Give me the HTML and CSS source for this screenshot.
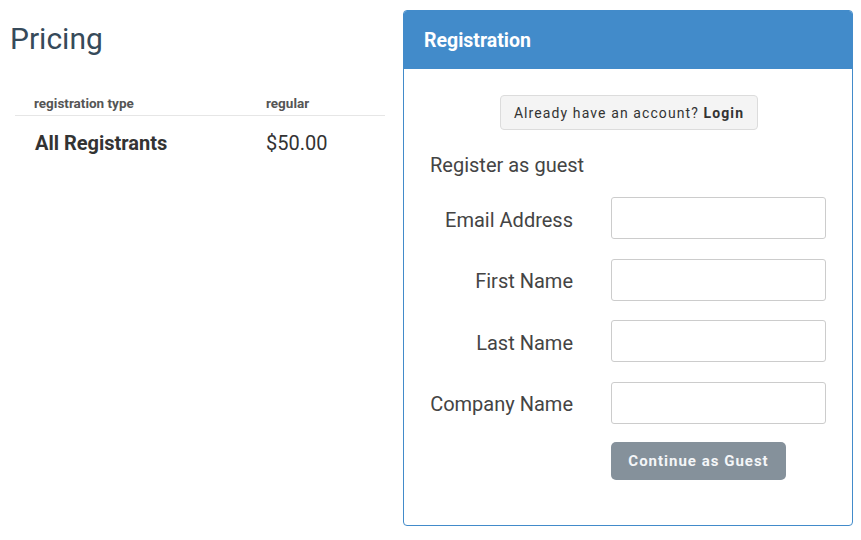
FILE: index.html
```html
<!DOCTYPE html>
<html>
<head>
<meta charset="utf-8">
<link rel="stylesheet" href="styles.css">
</head>
<body>
<div class="page">
  <section class="pricing">
    <h1 class="pricing-title">Pricing</h1>
    <table class="price-table">
      <thead>
        <tr><th class="col-type">registration type</th><th class="col-price">regular</th></tr>
      </thead>
      <tbody>
        <tr><td class="cell-type">All Registrants</td><td class="cell-price">$50.00</td></tr>
      </tbody>
    </table>
  </section>
  <section class="panel">
    <div class="panel-head">Registration</div>
    <div class="panel-body">
      <div class="login-wrap">
        <button class="login-btn">Already have an account? <b>Login</b></button>
      </div>
      <div class="guest-title">Register as guest</div>
      <form class="form">
        <label class="form-label">Email Address</label>
        <input class="form-input" type="text">
        <label class="form-label">First Name</label>
        <input class="form-input" type="text">
        <label class="form-label">Last Name</label>
        <input class="form-input" type="text">
        <label class="form-label">Company Name</label>
        <input class="form-input" type="text">
        <span></span>
        <div><button type="button" class="guest-btn">Continue as Guest</button></div>
      </form>
    </div>
  </section>
</div>
</body>
</html>
```
FILE: styles.css
```css
html, body {
  margin: 0;
  padding: 0;
  background: #fff;
  font-family: Roboto, "Liberation Sans", sans-serif;
}
.page {
  display: flex;
  align-items: flex-start;
}
.pricing {
  width: 385px;
  padding-left: 10px;
  padding-top: 20px;
  box-sizing: border-box;
}
.pricing-title {
  margin: 0;
  font-size: 30px;
  font-weight: 400;
  color: #364a5a;
  line-height: 38px;
}
.price-table {
  margin-left: 5px;
  margin-top: 33px;
  width: 370px;
  border-collapse: collapse;
  table-layout: fixed;
}
.price-table th {
  text-align: left;
  font-size: 13.5px;
  font-weight: 700;
  color: #555;
  padding: 0 0 4px 19px;
  height: 20px;
  border-bottom: 1px solid #e6e6e6;
  vertical-align: bottom;
}
.price-table th.col-type { width: 232px; }
.price-table th.col-price { padding-left: 0; }
.price-table td {
  padding: 14px 0 0 20px;
  font-size: 20px;
  color: #333;
  line-height: 26px;
}
.price-table td.cell-price { padding-left: 0; }
.price-table td.cell-type {
  font-weight: 700;
  font-size: 20px;
}
.panel {
  margin-top: 10px;
  margin-left: 18px;
  width: 450px;
  height: 516px;
  box-sizing: border-box;
  border: 1px solid #428bca;
  border-radius: 4px;
  overflow: hidden;
}
.panel-head {
  background: #428bca;
  color: #fff;
  font-size: 19.5px;
  font-weight: 700;
  height: 57px;
  padding-top: 1px;
  line-height: 57px;
  padding-left: 20px;
}
.panel-body {
  padding: 26px 25px 0 26px;
}
.login-wrap {
  display: flex;
  justify-content: center;
}
.login-btn {
  font-family: Roboto, "Liberation Sans", sans-serif;
  font-size: 14px;
  letter-spacing: 1.1px;
  color: #333;
  background: #f4f4f4;
  border: 1px solid #dcdcdc;
  border-radius: 4px;
  height: 35px;
  width: 258px;
  padding: 0;
  margin-left: 1px;
}
.login-btn b { font-weight: 700; }
.guest-title {
  margin-top: 23px;
  font-size: 20px;
  line-height: 24px;
  color: #444;
}
.form {
  margin-top: 20px;
  display: grid;
  grid-template-columns: 143px 215px;
  column-gap: 38px;
  row-gap: 19.5px;
  align-items: center;
}
.form-label {
  text-align: right;
  font-size: 20px;
  color: #444;
  padding-top: 3px;
}
.form-input {
  box-sizing: border-box;
  height: 42px;
  width: 215px;
  border: 1px solid #ccc;
  border-radius: 3px;
  margin: 0;
}
.guest-btn {
  margin-top: -1px;
  font-family: Roboto, "Liberation Sans", sans-serif;
  background: #85919b;
  color: #f4f6f8;
  border: none;
  border-radius: 5px;
  height: 38px;
  width: 175px;
  font-size: 15px;
  font-weight: 700;
  letter-spacing: 1px;
  padding: 0;
}
```
